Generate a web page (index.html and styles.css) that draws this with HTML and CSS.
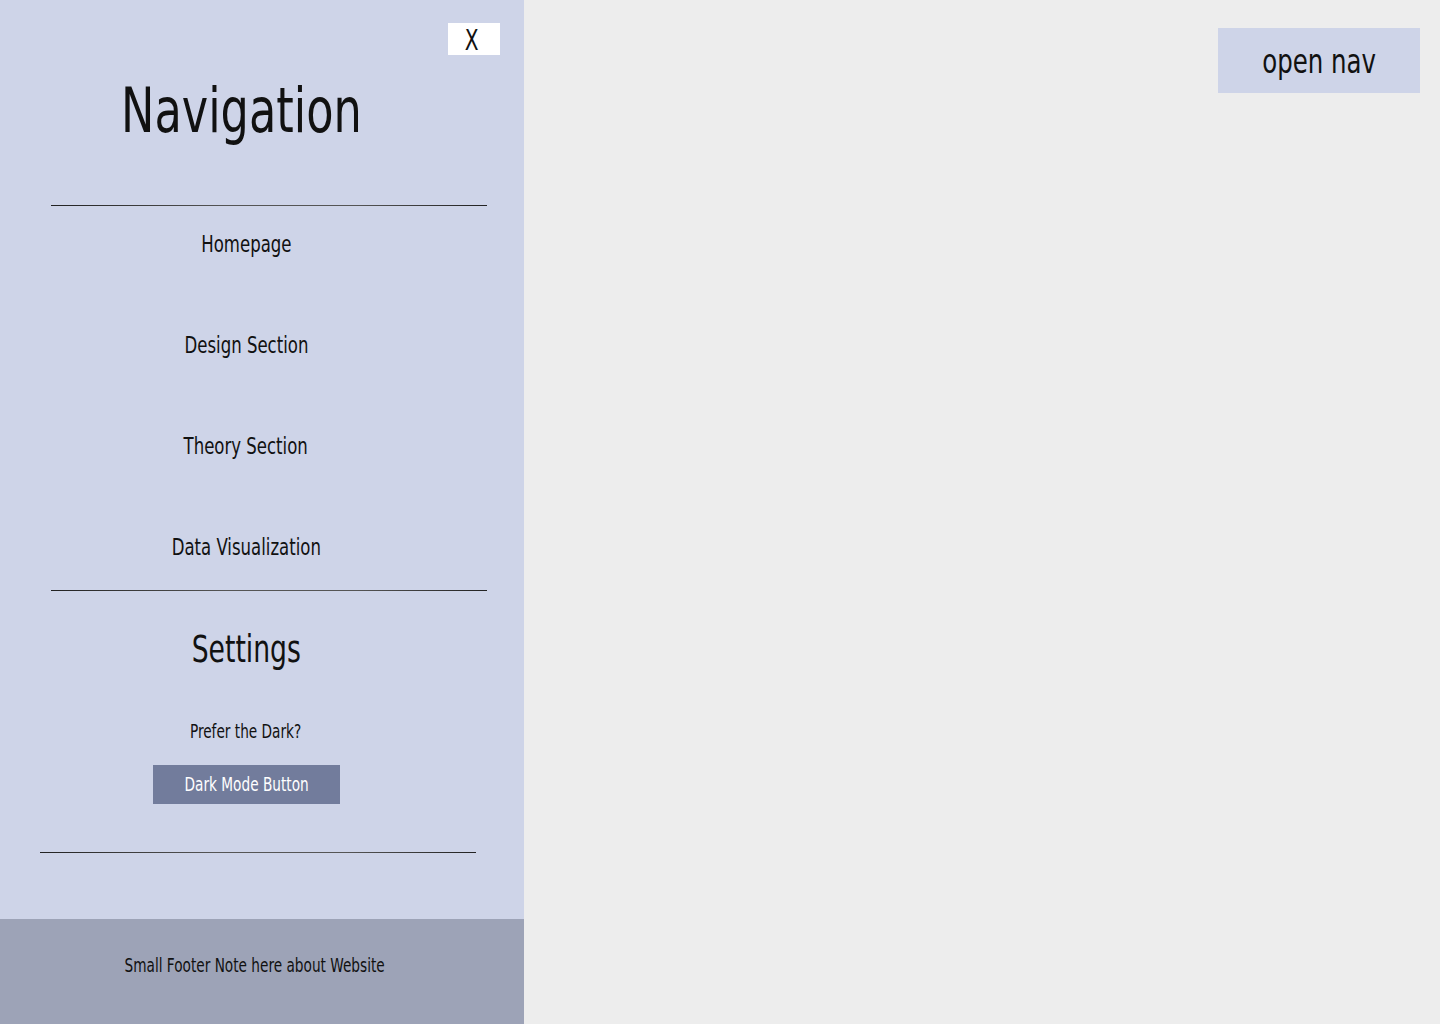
FILE: index.html
```html
<!DOCTYPE html>
<html lang="en">
<head>
<meta charset="utf-8">
<title>Navigation</title>
<link rel="stylesheet" href="styles.css">
</head>
<body>
<div class="page">
  <aside class="sidebar">
    <div class="close-row"><button class="close-btn"><span class="t">X</span></button></div>
    <h1 class="title"><span class="t">Navigation</span></h1>
    <hr class="rule rule-a">
    <nav class="links">
      <a class="link" href="#"><span class="t">Homepage</span></a>
      <a class="link" href="#"><span class="t">Design Section</span></a>
      <a class="link" href="#"><span class="t">Theory Section</span></a>
      <a class="link" href="#"><span class="t">Data Visualization</span></a>
    </nav>
    <hr class="rule rule-b">
    <h2 class="settings"><span class="t">Settings</span></h2>
    <p class="prefer"><span class="t">Prefer the Dark?</span></p>
    <div class="dark-row"><button class="dark-btn"><span class="t">Dark Mode Button</span></button></div>
    <hr class="rule rule-c">
    <footer class="footer"><span class="t">Small Footer Note here about Website</span></footer>
  </aside>
  <main class="main">
    <button class="open-btn"><span class="t">open nav</span></button>
  </main>
</div>
</body>
</html>
```

FILE: styles.css
```css
* { box-sizing: border-box; }
html, body { margin: 0; padding: 0; }
body {
  font-family: "DejaVu Sans Condensed", "DejaVu Sans", sans-serif;
  font-stretch: condensed;
  color: #111;
  background: #ededed;
}
.t {
  display: inline-block;
  transform: scaleX(0.8);
  white-space: nowrap;
}
.page { display: flex; width: 1440px; height: 1024px; }
.sidebar {
  width: 524px;
  height: 1024px;
  background: #ced4e8;
  display: flex;
  flex-direction: column;
}
.close-row {
  display: flex;
  justify-content: flex-end;
  padding: 23px 24px 0 0;
}
.close-btn {
  width: 52px;
  height: 32px;
  background: #fff;
  border: none;
  font: inherit;
  font-size: 28px;
  line-height: 36px;
  padding: 0 4px 0 0;
  color: #111;
}
.title {
  margin: 0;
  height: 115px;
  line-height: 112px;
  font-size: 62px;
  font-weight: normal;
  text-align: center;
  padding-right: 42px;
}
.rule {
  margin: 0;
  border: none;
  height: 1px;
  background: linear-gradient(90deg, #222 0%, #555 40%, #555 70%, #222 100%);
}
.rule-a { margin: 35px 37px 0 51px; }
.rule-b { margin: 3px 37px 0 51px; }
.rule-c { margin: 48px 48px 0 40px; }
.links { display: flex; flex-direction: column; gap: 23px; }
.link {
  display: block;
  height: 78px;
  line-height: 76px;
  text-align: center;
  font-size: 23px;
  color: #111;
  text-decoration: none;
  padding-right: 32px;
}
.settings {
  margin: 0;
  height: 118px;
  line-height: 118px;
  text-align: center;
  font-size: 37px;
  font-weight: normal;
  padding-right: 32px;
}
.prefer {
  margin: 0;
  height: 44px;
  line-height: 44px;
  text-align: center;
  font-size: 19px;
  padding-right: 32px;
}
.dark-row { display: flex; justify-content: flex-start; padding: 12px 0 0 153px; }
.dark-btn {
  width: 187px;
  height: 39px;
  background: #727c9c;
  color: #fff;
  border: none;
  font: inherit;
  font-size: 19px;
  line-height: 35px;
  padding: 0 0 0 0;
}
.footer {
  margin-top: auto;
  height: 105px;
  background: #9da3b7;
  display: flex;
  align-items: center;
  justify-content: center;
  font-size: 19px;
  padding-right: 14px;
  padding-bottom: 14px;
}
.main {
  flex: 1;
  background: #ededed;
  display: flex;
  justify-content: flex-end;
  align-items: flex-start;
  padding: 28px 20px 0 0;
}
.open-btn {
  width: 202px;
  height: 65px;
  background: #ced4e8;
  border: none;
  font: inherit;
  font-size: 34px;
  color: #111;
  padding: 0;
}
```
